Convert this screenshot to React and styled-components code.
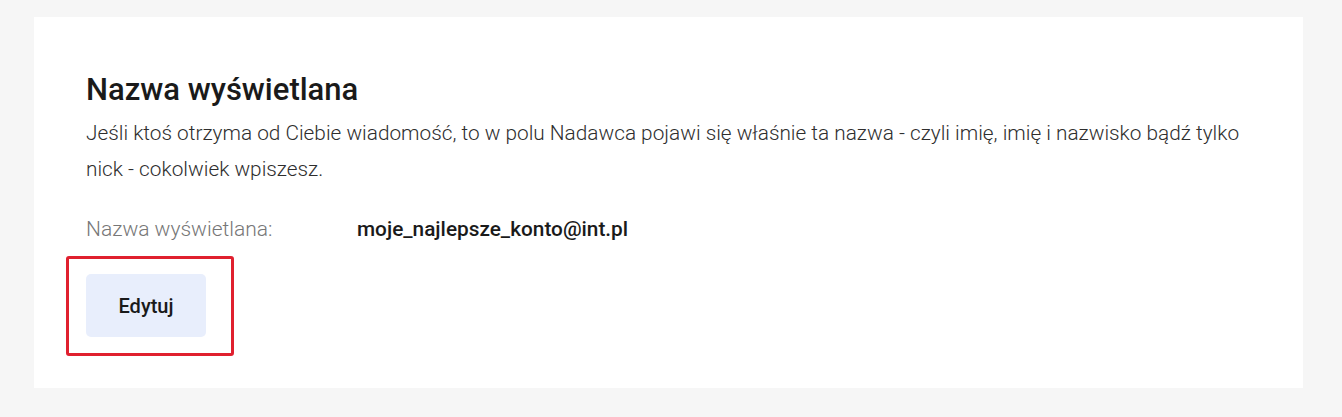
import React from "react";
import styled, { createGlobalStyle } from "styled-components";

const GlobalStyle = createGlobalStyle`
  body {
    margin: 0;
    background: #f6f6f6;
    font-family: Roboto, "Liberation Sans", sans-serif;
  }
`;

const Page = styled.div`
  padding: 17px 39px 29px 34px;
`;

const Card = styled.section`
  background: #ffffff;
  height: 371px;
  box-sizing: border-box;
  padding: 53px 52px 0;
`;

const Title = styled.h2`
  margin: 0;
  font-size: 31px;
  line-height: 40px;
  font-weight: 500;
  color: #1a1a1a;
`;

const Description = styled.p`
  margin: 5px 0 0;
  font-size: 20.8px;
  line-height: 36px;
  font-weight: 300;
  color: #2e2e2e;
  max-width: 1170px;
`;

const Field = styled.div`
  display: grid;
  grid-template-columns: 271px auto;
  margin-top: 28px;
  font-size: 21px;
  line-height: 28px;
`;

const Label = styled.span`
  color: #777777;
  font-weight: 300;
`;

const Value = styled.span`
  color: #1a1a1a;
  font-weight: 500;
  font-size: 20.8px;
`;

const Highlight = styled.div`
  display: inline-block;
  margin: 13px 0 0 -20px;
  padding: 15px 25px 16px 17px;
  border: 3px solid #e0202f;
  border-radius: 3px;
`;

const Button = styled.button`
  display: block;
  width: 120px;
  height: 63px;
  border: none;
  border-radius: 5px;
  background: ${(p) => (p.$tone === "soft" ? "#e8eefc" : "#2f5bea")};
  color: ${(p) => (p.$tone === "soft" ? "#1a1a1a" : "#ffffff")};
  font-family: inherit;
  font-size: 20px;
  font-weight: 500;
  cursor: pointer;
`;

const App = () => {
  return (
    <>
      <GlobalStyle />
      <Page>
        <Card>
          <Title>Nazwa wyświetlana</Title>
          <Description>
            Jeśli ktoś otrzyma od Ciebie wiadomość, to w polu Nadawca pojawi się
            właśnie ta nazwa - czyli imię, imię i nazwisko bądź tylko nick -
            cokolwiek wpiszesz.
          </Description>
          <Field>
            <Label>Nazwa wyświetlana:</Label>
            <Value>moje_najlepsze_konto@int.pl</Value>
          </Field>
          <Highlight>
            <Button $tone='soft'>Edytuj</Button>
          </Highlight>
        </Card>
      </Page>
    </>
  );
};

export default App;
